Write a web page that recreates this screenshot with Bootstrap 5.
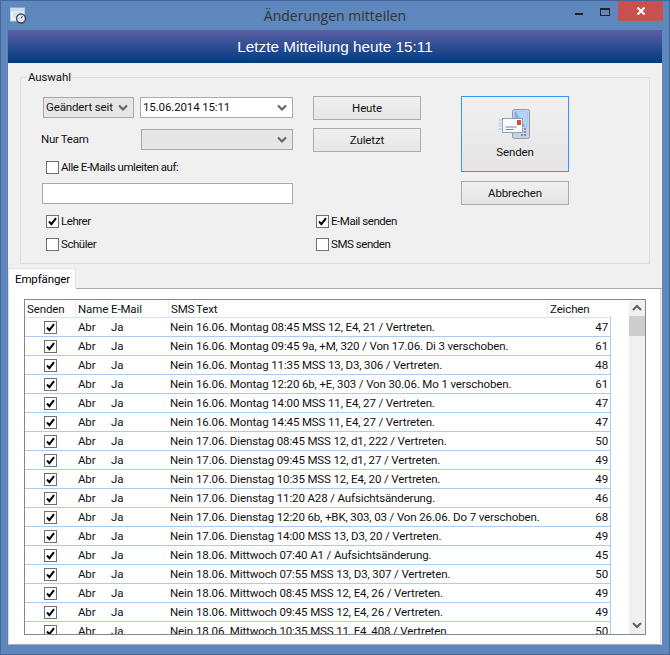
<!DOCTYPE html>
<html lang="de">
<head>
<meta charset="UTF-8">
<title>Änderungen mitteilen</title>
<link href="https://cdn.jsdelivr.net/npm/bootstrap@5.3.3/dist/css/bootstrap.min.css" rel="stylesheet">
<style>
html, body { height: 655px; overflow: hidden; margin: 0; background: #5b84bc; }
body, .btn, .form-select, .form-control, .nav-link, .table { font-family: Roboto, "Liberation Sans", Arial, sans-serif; font-size: 11.5px; color: #111; letter-spacing: -0.13px; }
.win { height: 655px; width: 670px; background: #5e87bd; border: 1px solid #46679a; }
.tbar { height: 29px; position: relative; }
.tbar-title { font: 14px "Open Sans", "Liberation Sans", sans-serif; color: #333; width: 100%; text-align: center; padding-top: 5px; letter-spacing: 0; }
.app-ico { position: absolute; left: 9px; top: 6px; }
.wbtns { position: absolute; right: 6px; top: 0; }
.wb-min { width: 8px; height: 2px; background: #222; margin: 12px 17px 0 0; }
.wb-max { width: 10px; height: 8px; border: 1px solid #222; border-top-width: 2px; margin: 7px 8px 0 0; }
.wb-close { width: 45px; height: 20px; background: #c75050; color: #fff; }
.client { width: 654px; margin-left: 7px; height: 615px; background: #f0f0f0; }
.headband { height: 33px; background: linear-gradient(#5b5ea3, #003c80); color: #fff; font: 15.3px "Liberation Sans", sans-serif; line-height: 33px; text-align: center; letter-spacing: 0; }
.grp { position: relative; margin: 14px 12px 0; height: 187px; border: 1px solid #dcdcdc; padding: 18px 0 0 20px; }
.grp-legend { position: absolute; left: 6px; top: -8px; background: #f0f0f0; padding: 0 1px; line-height: 15px; }
.col-left { width: 252px; }
.col-mid { width: 108px; margin-left: 20px; }
.col-right { width: 108px; margin-left: 40px; }
.team-lbl { letter-spacing: -0.3px; }
.form-select.wsel, .form-control.wsel { height: 21px; min-height: 21px; padding: 0 2px; border: 1px solid #ababab; border-radius: 0; box-shadow: none; color: #111; }
.form-select.wsel { background-color: #fff; background-position: right 5px center; background-size: 10px 8px;
  background-image: url("data:image/svg+xml,%3csvg xmlns='http://www.w3.org/2000/svg' viewBox='0 0 10 8'%3e%3cpath fill='none' stroke='%23666' stroke-width='2.2' d='M1 1.5l4 4 4-4'/%3e%3c/svg%3e"); }
.form-select.wsel.grey { background-color: #e6e6e6; border-color: #a8a8a8; }
.wbtn { display: block; width: 108px; height: 24px; padding: 1px 0 0; border: 1px solid #acacac; border-radius: 0; background: linear-gradient(#f0f0f0, #e5e5e5); color: #111; }
.wbtn-send { height: 76px; border-color: #3399ff; padding-top: 11px; }
.chk { display: flex; align-items: center; height: 13px; gap: 2px; line-height: 13px; letter-spacing: -0.45px; }
.form-check-input.wchk { width: 13px; height: 13px; margin: 0; flex: none; border: 1px solid #707070; border-radius: 0; background-color: #fff; box-shadow: none; }
.form-check-input.wchk:checked { background-color: #fff; border-color: #707070; background-size: 11px 11px;
  background-image: url("data:image/svg+xml,%3csvg xmlns='http://www.w3.org/2000/svg' viewBox='0 0 11 11'%3e%3cpath fill='none' stroke='%23000' stroke-width='2' d='M2 5.5l2.4 2.6L9 2.2'/%3e%3c/svg%3e"); }
.tabs-wrap { margin-top: 4px; }
.nav-tabs.wtabs { border-bottom: 1px solid #acacac; height: 21px; }
.wtabs .nav-link { height: 21px; width: 68px; padding: 2px 0 0 6px; border: 1px solid #acacac; border-bottom-color: #fff; border-radius: 0; background: #fff; color: #111; margin: 0; }
.tabpane { height: 356px; background: #fff; border: 1px solid #d9d9d9; border-top: 0; border-bottom-color: #acacac; margin-right: 1px; padding: 10px 14px 0 15px; }
.listbox { height: 336px; border: 1px solid #828790; overflow: hidden; }
.listarea { width: 603px; overflow: hidden; }
.table.wtbl { table-layout: fixed; width: 586px; margin: 0; border-collapse: separate; border-spacing: 0; --bs-table-bg: #fff; }
.wtbl th { font-weight: 400; height: 17px; padding: 0 2px; border: 0; border-right: 1px solid #e3effb; line-height: 16px; vertical-align: middle; }
.wtbl td { height: 19px; padding: 0 2px; border: 0; border-bottom: 1px solid #a9ccf0; line-height: 18px; white-space: nowrap; overflow: visible; vertical-align: middle; }
.wtbl td:nth-child(4), .wtbl td:nth-child(5), .wtbl th:nth-child(5) { padding-left: 1px; }
.wtbl td:last-child { border-right: 1px solid #a9ccf0; text-align: right; }
.wtbl th:last-child { border-right: 0; }
.wtbl tbody tr:first-child td { height: 20px; border-top: 1px solid #d3e4f7; }
.wtbl td.chkcell .wchk { display: block; margin: 0 auto; }
.sbar { width: 16px; background: #f0f0f0; margin-left: auto; }
.sb-arrow { height: 16px; }
.sb-thumb { height: 20px; background: #cdcdcd; }
</style>
</head>
<body>
<div class="win">
  <div class="tbar d-flex">
    <svg class="app-ico" width="17" height="17" viewBox="0 0 17 17">
      <rect x="0.5" y="1" width="14" height="13" fill="#eef4fb" stroke="#b9cde6"/>
      <rect x="1" y="1.5" width="13" height="3" fill="#c9d9ec"/>
      <path d="M3 6h9M3 8h4M3 10h4" stroke="#c3d2e4"/>
      <circle cx="11" cy="11.5" r="4.5" fill="#dfe8f3" stroke="#37475f" stroke-width="1.4"/>
      <path d="M11 11.5l1.6-2.6" stroke="#37475f"/>
    </svg>
    <div class="tbar-title">Änderungen mitteilen</div>
    <div class="wbtns d-flex">
      <div class="wb-min"></div>
      <div class="wb-max"></div>
      <div class="wb-close d-flex align-items-center justify-content-center">
        <svg width="10" height="10" viewBox="0 0 10 10"><path d="M1.5 1.5l7 7M8.500 1.5l-7 7" stroke="#fff" stroke-width="2"/></svg>
      </div>
    </div>
  </div>

  <div class="client">
    <div class="headband">Letzte Mitteilung heute 15:11</div>

    <div class="grp d-flex">
      <span class="grp-legend">Auswahl</span>

      <div class="col-left">
        <div class="d-flex" style="margin:1px 0 0 2px">
          <select class="form-select wsel grey" style="width:91px"><option>Geändert seit</option></select>
          <select class="form-select wsel ms-auto" style="width:153px"><option>15.06.2014 15:11</option></select>
        </div>
        <div class="d-flex align-items-center" style="margin-top:11px">
          <span class="team-lbl">Nur Team</span>
          <select class="form-select wsel grey ms-auto" style="width:152px"></select>
        </div>
        <label class="chk" style="margin:11px 0 0 5px"><input class="form-check-input wchk" type="checkbox">Alle E-Mails umleiten auf:</label>
        <input class="form-control wsel" type="text" style="margin:9px 0 0 1px;width:251px">
        <label class="chk" style="margin:11px 0 0 5px"><input class="form-check-input wchk" type="checkbox" checked>Lehrer</label>
        <label class="chk" style="margin:10px 0 0 5px"><input class="form-check-input wchk" type="checkbox">Schüler</label>
      </div>

      <div class="col-mid">
        <button type="button" class="btn wbtn">Heute</button>
        <button type="button" class="btn wbtn" style="margin-top:8px">Zuletzt</button>
        <label class="chk" style="margin:63px 0 0 3px"><input class="form-check-input wchk" type="checkbox" checked>E-Mail senden</label>
        <label class="chk" style="margin:10px 0 0 3px"><input class="form-check-input wchk" type="checkbox">SMS senden</label>
      </div>

      <div class="col-right">
        <button type="button" class="btn wbtn wbtn-send d-flex flex-column align-items-center">
          <svg width="34" height="32" viewBox="0 0 34 32">
            <rect x="14.500" y="1.500" width="17" height="29" rx="2" fill="#c6d3e3" stroke="#8b9bb0"/>
            <rect x="16.500" y="3.500" width="13" height="15" fill="#7fb0ee"/>
            <path d="M18 4l9 14h2.500V3.500H18z" fill="#b5d3f6"/>
            <path d="M23 21h2M26 21h2M23 24h2M26 24h2M23 27h2M26 27h2" stroke="#6d7c92" stroke-width="1.500"/>
            <rect x="4.500" y="10.500" width="20" height="14" fill="#fafcfe" stroke="#90a2ba"/>
            <rect x="19" y="12" width="4" height="5" fill="#dc4b2b"/>
            <path d="M7.500 19h11M7.500 21.500h8" stroke="#6f87a8"/>
            <path d="M1 12h3M1 15h3M1 18h3M1 21h3" stroke="#9badc4" stroke-dasharray="1.500 1"/>
          </svg>
          <span style="margin-top:4px">Senden</span>
        </button>
        <button type="button" class="btn wbtn" style="margin-top:9px">Abbrechen</button>
      </div>
    </div>

    <div class="tabs-wrap">
      <ul class="nav nav-tabs wtabs">
        <li class="nav-item"><a class="nav-link active" href="#">Empfänger</a></li>
      </ul>
      <div class="tabpane">
        <div class="listbox d-flex">
          <div class="listarea">
            <table class="table wtbl">
              <colgroup><col style="width:51px"><col style="width:33px"><col style="width:60px"><col style="width:26px"><col style="width:353px"><col style="width:63px"></colgroup>
              <thead><tr><th>Senden</th><th>Name</th><th>E-Mail</th><th>SMS</th><th>Text</th><th>Zeichen</th></tr></thead>
              <tbody id="rows"></tbody>
            </table>
          </div>
          <div class="sbar">
            <div class="sb-arrow d-flex align-items-center justify-content-center">
              <svg width="10" height="8" viewBox="0 0 10 8"><path d="M1 6l4-4 4 4" fill="none" stroke="#606060" stroke-width="2"/></svg>
            </div>
            <div class="sb-thumb"></div>
            <div class="sb-arrow d-flex align-items-center justify-content-center" style="margin-top:281px">
              <svg width="10" height="8" viewBox="0 0 10 8"><path d="M1 2l4 4 4-4" fill="none" stroke="#606060" stroke-width="2"/></svg>
            </div>
          </div>
        </div>
      </div>
    </div>
  </div>
</div>

<script>
const msgs = [
  ['16.06. Montag 08:45 MSS 12, E4, 21 / Vertreten.', 47],
  ['16.06. Montag 09:45 9a, +M, 320 / Von 17.06. Di 3 verschoben.', 61],
  ['16.06. Montag 11:35 MSS 13, D3, 306 / Vertreten.', 48],
  ['16.06. Montag 12:20 6b, +E, 303 / Von 30.06. Mo 1 verschoben.', 61],
  ['16.06. Montag 14:00 MSS 11, E4, 27 / Vertreten.', 47],
  ['16.06. Montag 14:45 MSS 11, E4, 27 / Vertreten.', 47],
  ['17.06. Dienstag 08:45 MSS 12, d1, 222 / Vertreten.', 50],
  ['17.06. Dienstag 09:45 MSS 12, d1, 27 / Vertreten.', 49],
  ['17.06. Dienstag 10:35 MSS 12, E4, 20 / Vertreten.', 49],
  ['17.06. Dienstag 11:20 A28 / Aufsichtsänderung.', 46],
  ['17.06. Dienstag 12:20 6b, +BK, 303, 03 / Von 26.06. Do 7 verschoben.', 68],
  ['17.06. Dienstag 14:00 MSS 13, D3, 20 / Vertreten.', 49],
  ['18.06. Mittwoch 07:40 A1 / Aufsichtsänderung.', 45],
  ['18.06. Mittwoch 07:55 MSS 13, D3, 307 / Vertreten.', 50],
  ['18.06. Mittwoch 08:45 MSS 12, E4, 26 / Vertreten.', 49],
  ['18.06. Mittwoch 09:45 MSS 12, E4, 26 / Vertreten.', 49],
  ['18.06. Mittwoch 10:35 MSS 11, E4, 408 / Vertreten.', 50]
];
document.getElementById('rows').innerHTML = msgs.map(m => `<tr>
  <td class="chkcell"><input class="form-check-input wchk" type="checkbox" checked></td>
  <td>Abr</td><td>Ja</td><td>Nein</td><td>${m[0]}</td><td>${m[1]}</td></tr>`).join('');
</script>
<script src="https://cdn.jsdelivr.net/npm/bootstrap@5.3.3/dist/js/bootstrap.bundle.min.js"></script>
</body>
</html>
